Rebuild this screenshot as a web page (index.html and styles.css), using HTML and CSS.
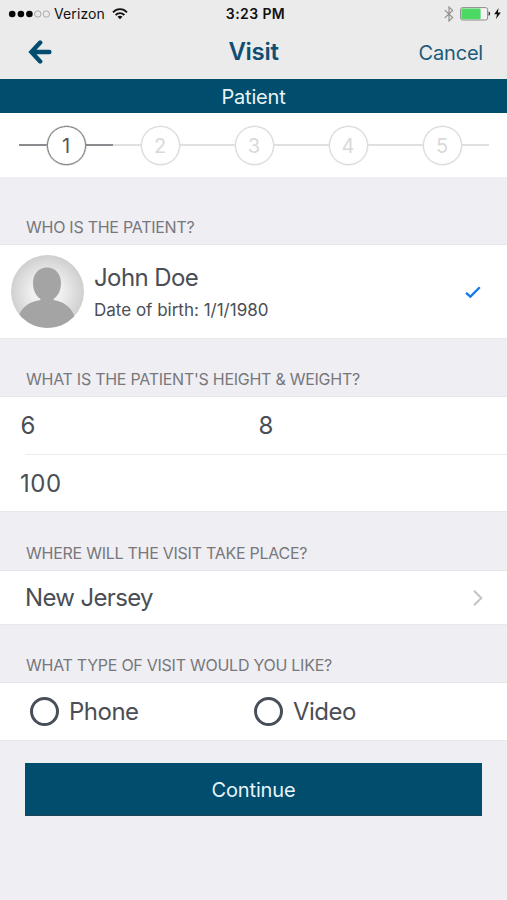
FILE: index.html
```html
<!DOCTYPE html>
<html lang="en">
<head>
  <meta charset="UTF-8">
  <meta name="viewport" content="width=device-width, initial-scale=1.0">
  <title>Visit</title>
  <link rel="stylesheet" href="styles.css">
</head>
<body>
  <header class="top">
    <div class="status-bar">
      <div class="status-left">
        <svg class="signal" width="42" height="10" viewBox="0 0 42 10">
          <g fill="#050505">
            <circle cx="4.2" cy="5" r="3.3"/>
            <circle cx="12.9" cy="5" r="3.3"/>
            <circle cx="21.4" cy="5" r="3.3"/>
          </g>
          <g fill="none" stroke="#999" stroke-width="0.8">
            <circle cx="29.8" cy="5" r="3.2"/>
            <circle cx="38.3" cy="5" r="3.2"/>
          </g>
        </svg>
        <span class="carrier">Verizon</span>
        <svg class="wifi" width="16" height="12" viewBox="0 0 16 12">
          <g fill="none" stroke="#111" stroke-width="1.8">
            <path d="M1 4.3C5 0.1 11 0.1 15 4.3"/>
            <path d="M3.6 7C6.2 4.4 9.8 4.4 12.4 7"/>
          </g>
          <path d="M5.5 8.7C7 7.4 9 7.4 10.5 8.7L8 11.3Z" fill="#111"/>
        </svg>
      </div>
      <span class="clock">3:23 PM</span>
      <div class="status-right">
        <svg width="10" height="16" viewBox="0 0 10 16">
          <path d="M0.8 4.2L8.6 11.6L5 15V1L8.6 4.4L0.8 11.8" fill="none" stroke="#8d8d8d" stroke-width="1.1"/>
        </svg>
        <svg class="battery" width="31" height="14" viewBox="0 0 31 14">
          <rect x="0.6" y="0.6" width="27" height="12.4" rx="2" fill="#f4f4f4" stroke="#8c8c8c"/>
          <rect x="1.4" y="1.4" width="19.2" height="10.8" rx="1" fill="#4bd964"/>
          <path d="M28.6 4.6C30.6 5 30.6 8.6 28.6 9Z" fill="#333"/>
        </svg>
        <svg class="bolt" width="7" height="11" viewBox="0 0 7 11">
          <path d="M4.6 0L0.2 6.2H3L2 11L6.8 4.4H3.9Z" fill="#111"/>
        </svg>
      </div>
    </div>
    <nav class="nav">
      <a class="back" href="#" aria-label="Back">
        <svg width="24" height="24" viewBox="0 0 24 24">
          <path d="M12.2 2.6L3.4 12L12.2 21.4M4 12H21.4" fill="none" stroke="#004d6f" stroke-width="4.4" stroke-linecap="round" stroke-linejoin="miter"/>
        </svg>
      </a>
      <h1 class="title">Visit</h1>
      <a class="cancel" href="#">Cancel</a>
    </nav>
  </header>

  <div class="banner">Patient</div>

  <ol class="steps">
    <li class="step active"><span>1</span></li>
    <li class="step"><span>2</span></li>
    <li class="step"><span>3</span></li>
    <li class="step"><span>4</span></li>
    <li class="step"><span>5</span></li>
  </ol>

  <h2 class="heading heading-first">WHO IS THE PATIENT?</h2>
  <section class="card patient">
    <svg class="avatar" width="74" height="74" viewBox="0 0 74 74">
      <defs>
        <radialGradient id="avatar-bg">
          <stop offset="0.4" stop-color="#f0f0f0"/>
          <stop offset="1" stop-color="#cfcfcf"/>
        </radialGradient>
        <clipPath id="avatar-clip"><circle cx="37.5" cy="36.5" r="36.5"/></clipPath>
      </defs>
      <g clip-path="url(#avatar-clip)">
        <rect width="74" height="74" fill="url(#avatar-bg)"/>
        <path d="M37 12.5C45.500 12.500 51 19 51 28C51 35.500 48 41 43.500 44V45C53 46.500 60 51 64 60V74H9V60C13 51 20 46.500 30.500 45V44C26 41 23 35.500 23 28C23 19 28.500 12.500 37 12.500Z" fill="#a4a4a4"/>
      </g>
    </svg>
    <div class="patient-info">
      <p class="name">John Doe</p>
      <p class="birth">Date of birth: 1/1/1980</p>
    </div>
    <svg class="check" width="18" height="14" viewBox="0 0 18 14">
      <path d="M2 7.800L6.400 11.600L15.800 2.300" fill="none" stroke="#1478e6" stroke-width="2.300"/>
    </svg>
  </section>

  <h2 class="heading heading-size">WHAT IS THE PATIENT'S HEIGHT &amp; WEIGHT?</h2>
  <section class="card size">
    <div class="size-row">
      <span>6</span>
      <span>8</span>
    </div>
    <div class="size-row weight"><span>100</span></div>
  </section>

  <h2 class="heading heading-place">WHERE WILL THE VISIT TAKE PLACE?</h2>
  <section class="card place">
    <span class="state">New Jersey</span>
    <svg width="12" height="18" viewBox="0 0 12 18">
      <path d="M2 1.800L9.300 9L2 16.200" fill="none" stroke="#c3c3c6" stroke-width="2"/>
    </svg>
  </section>

  <h2 class="heading heading-type">WHAT TYPE OF VISIT WOULD YOU LIKE?</h2>
  <section class="card types">
    <div class="type"><i class="radio"></i><span>Phone</span></div>
    <div class="type"><i class="radio"></i><span>Video</span></div>
  </section>

  <button class="continue" type="button">Continue</button>
</body>
</html>
```

FILE: styles.css
```css
* {
  margin: 0;
  padding: 0;
  box-sizing: border-box;
}
body {
  height: 900px;
  background-color: #efeef3;
  color: #4a4e55;
  font-family: Inter, "Liberation Sans", sans-serif;
  overflow: hidden;
}
svg {
  display: block;
  flex: none;
}
a {
  color: #1b5a7a;
  text-decoration: none;
}

/* top bar */
.top {
  height: 79px;
  background-color: #ebebeb;
}
.status-bar {
  display: grid;
  grid-template-columns: 1fr auto 1fr;
  align-items: center;
  height: 27px;
  padding: 0 6px 0 8px;
  color: #111;
}
.status-left,
.status-right {
  display: flex;
  align-items: center;
}
.status-right {
  justify-content: flex-end;
}
.carrier {
  margin: 0 7px 0 4px;
  font-size: 14px;
  letter-spacing: 0.1px;
}
.clock {
  padding-left: 2px;
  font-size: 14px;
  font-weight: 600;
  letter-spacing: 0.4px;
}
.battery {
  margin: 0 3px 0 6px;
}
.nav {
  display: grid;
  grid-template-columns: 1fr auto 1fr;
  align-items: center;
  height: 50px;
  padding: 0 24px 0 28px;
}
.title {
  padding: 0 4px 2px 0;
  color: #104e73;
  font-size: 24px;
  font-weight: 600;
  letter-spacing: -0.3px;
}
.cancel {
  justify-self: end;
  padding-top: 1px;
  font-size: 20px;
  letter-spacing: -0.2px;
}
.banner {
  height: 34px;
  background-color: #004d6e;
  color: #e8f3f8;
  font-size: 20px;
  letter-spacing: -0.2px;
  line-height: 36px;
  text-align: center;
}

/* progress */
.steps {
  display: flex;
  height: 64px;
  padding: 0 18px 0 19px;
  background-color: #fff;
  list-style: none;
}
.step {
  display: flex;
  flex: 1;
  align-items: center;
  color: #d9d9d9;
}
.step::before,
.step::after {
  content: "";
  flex: 1;
  height: 2px;
  background-color: #e0e0e0;
}
.step span {
  width: 39px;
  height: 39px;
  border: 1.500px solid #d6d6d6;
  box-shadow: 0 0 0 0.500px #e2e2e2;
  border-radius: 50%;
  font-size: 20px;
  line-height: 39px;
  text-align: center;
}
.step.active {
  color: #55565a;
}
.step.active::before,
.step.active::after {
  background-color: #8b8c90;
}
.step.active span {
  border-color: #77787b;
  box-shadow: 0 0 0 0.500px #a5a6a8;
}

/* form */
.heading {
  display: flex;
  align-items: flex-end;
  height: 59px;
  padding: 0 0 8px 26px;
  color: #77777c;
  font-size: 16px;
  font-weight: 400;
  letter-spacing: -0.26px;
  line-height: 20px;
}
.heading-first {
  height: 68px;
}
.heading-place {
  height: 60px;
}
.card {
  background-color: #fff;
  box-shadow: 0 0 0 1px #e8e8eb;
}
.patient {
  display: flex;
  align-items: center;
  height: 93px;
  padding: 0 25px 0 10px;
}
.patient-info {
  flex: 1;
  margin-left: 10px;
  padding-top: 4px;
}
.name {
  font-size: 24px;
  letter-spacing: -0.6px;
  line-height: 32px;
}
.birth {
  font-size: 17px;
  line-height: 32px;
}
.size {
  height: 114px;
  font-size: 24px;
}
.size-row {
  display: grid;
  grid-template-columns: 238px 1fr;
  align-items: center;
  height: 57px;
  padding-left: 20.500px;
}
.weight {
  margin-left: 25px;
  padding-left: 0;
  border-top: 1px solid #ebebed;
}
.weight span {
  margin-left: -5px;
  letter-spacing: 0.5px;
}
.place {
  display: flex;
  align-items: center;
  justify-content: space-between;
  height: 53px;
  padding: 0 23px 0 25px;
  font-size: 24px;
  letter-spacing: -0.65px;
}
.types {
  display: grid;
  grid-template-columns: 224px 1fr;
  height: 57px;
  padding-left: 30px;
  font-size: 24px;
  letter-spacing: -0.5px;
}
.type {
  display: flex;
  align-items: center;
  gap: 10px;
}
.radio {
  width: 29px;
  height: 29px;
  border: 3px solid #484e5a;
  border-radius: 50%;
}
.continue {
  display: block;
  width: 457px;
  height: 53px;
  margin: 23px 25px 0;
  padding-top: 2px;
  border: 0;
  border-bottom: 1px solid #1c4257;
  background-color: #004d6e;
  color: #e8f3f8;
  font-family: inherit;
  font-size: 20px;
  letter-spacing: -0.15px;
}
```
